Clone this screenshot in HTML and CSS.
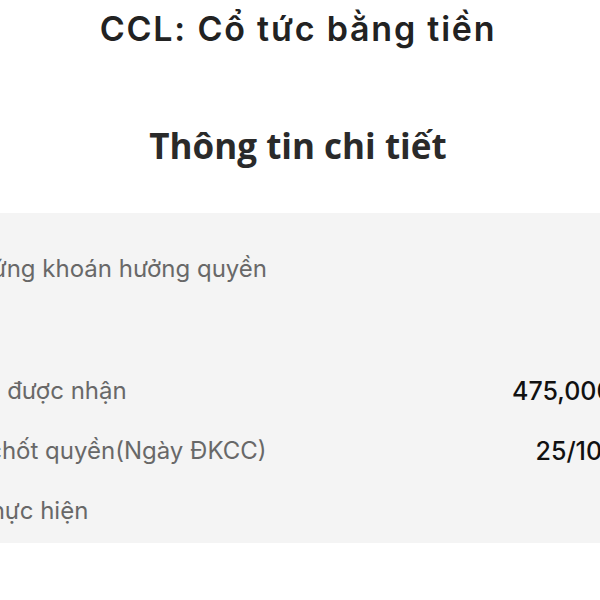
FILE: index.html
```html
<!DOCTYPE html>
<html lang="vi">
<head>
  <meta charset="UTF-8">
  <title>CCL: Cổ tức bằng tiền</title>
  <link rel="stylesheet" href="styles.css">
</head>
<body>
<div class="screen">
  <h1 class="page-title">CCL: Cổ tức bằng tiền</h1>

  <h2 class="section-title">Thông tin chi tiết</h2>

  <div class="detail-card">
    <div class="detail-row detail-row--tall">
      <span class="detail-label">Mã chứng khoán hưởng quyền</span>
      <span class="detail-value"></span>
    </div>
    <div class="detail-row">
      <span class="detail-label">Số tiền được nhận</span>
      <span class="detail-value">475,000 VND</span>
    </div>
    <div class="detail-row">
      <span class="detail-label">Ngày chốt quyền(Ngày ĐKCC)</span>
      <span class="detail-value">25/10/2023</span>
    </div>
    <div class="detail-row">
      <span class="detail-label">Tỷ lệ thực hiện</span>
      <span class="detail-value"></span>
    </div>
  </div>
</div>
</body>
</html>
```

FILE: styles.css
```css
:root {
  --text-dark: #222;
  --text-value: #111;
  --text-muted: #686868;
  --card-bg: #f4f4f4;
  --font-family: 'Inter', 'Roboto', 'Liberation Sans', sans-serif;
}

html,
body {
  margin: 0;
  padding: 0;
  background-color: #fff;
  overflow: hidden;
}

body {
  font-family: var(--font-family);
  color: var(--text-dark);
}

/* the phone screen is wider than the window and cropped on both sides */
.screen {
  width: 752px;
  margin-left: -78px;
}

.page-title {
  margin: 0;
  padding-top: 9px;
  text-align: center;
  font-size: 34px;
  font-weight: 600;
  line-height: 40px;
  letter-spacing: 1.8px;
  color: var(--text-dark);
}

.section-title {
  margin: 74px 0 0;
  text-align: center;
  font-family: 'Open Sans', var(--font-family);
  font-size: 35px;
  font-weight: 700;
  line-height: 46px;
  color: #2a2a2a;
}

.detail-card {
  margin-top: 44px;
  padding: 26px 0 2px;
  background-color: var(--card-bg);
}

.detail-row {
  display: flex;
  justify-content: space-between;
  align-items: flex-start;
  height: 60px;
  line-height: 60px;
}

.detail-row--tall {
  height: 122px;
}

.detail-label {
  font-size: 24px;
  color: var(--text-muted);
}

.detail-value {
  font-size: 25px;
  font-weight: 500;
  color: var(--text-value);
}
```
